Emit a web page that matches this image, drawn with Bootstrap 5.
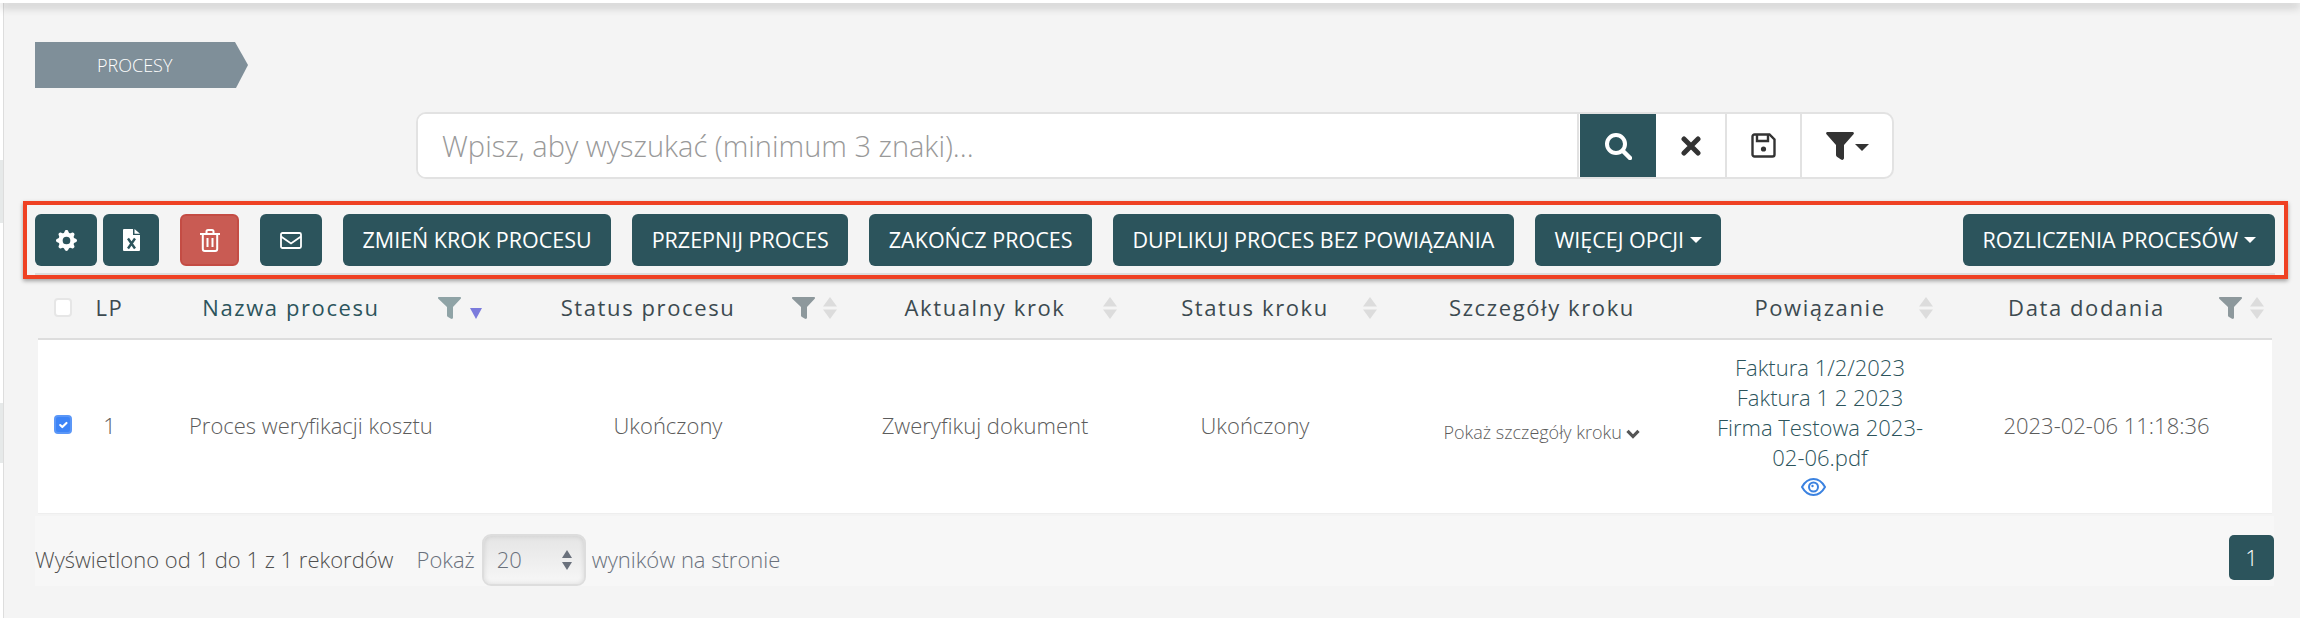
<!DOCTYPE html>
<html lang="pl">
<head>
    <meta charset="UTF-8">
    <title>Procesy</title>
    <link href="https://cdn.jsdelivr.net/npm/bootstrap@5.3.0/dist/css/bootstrap.min.css" rel="stylesheet">
    <style>
        body { background: #f4f4f4; font-family: "Open Sans", sans-serif; font-size: 22px; color: #5c5c5c; overflow: hidden; }
        .top-strip { height: 3px; background: #fff; box-shadow: 0 3px 10px rgba(0,0,0,.4); position: relative; }
        .side-strip { width: 4px; min-height: 615px; background: linear-gradient(#fff 157px, #e6e9e9 157px, #e6e9e9 220px, #fff 220px, #fff 400px, #e6e9e9 400px, #e6e9e9 460px, #fff 460px); border-right: 1px solid #ddd; }
        .page-main { width: 2296px; padding: 39px 12px 0 19px; }

        .crumb { width: 213px; height: 46px; margin-left: 12px; padding-left: 62px; background: #7f8f99; color: #fff; font-size: 18px; font-weight: 300; line-height: 46px; clip-path: polygon(0 0, 200px 0, 213px 50%, 201px 100%, 0 100%); }

        .search-box { width: 1478px; height: 67px; margin: 24px 0 22px 393px; background: #fff; border: 2px solid #e2e2e2; border-radius: 10px; overflow: hidden; }
        .search-box .form-control { border: 0; border-right: 2px solid #e2e2e2; border-radius: 0; height: 63px; padding-left: 24px; font-size: 29px; font-weight: 300; box-shadow: none; }
        .search-box .form-control::placeholder { color: #999; }
        .search-box .btn { border: 0; border-radius: 0; padding: 0; margin-left: 0 !important; display: flex; align-items: center; justify-content: center; height: 63px; }
        .search-box .btn-find { width: 76px; margin-left: 1px !important; background: #2c545c; }
        .btn-clear { width: 71px; border-right: 2px solid #e2e2e2 !important; }
        .btn-save { width: 75px; border-right: 2px solid #e2e2e2 !important; }
        .btn-funnel { width: 90px; }
        .caret-sm { width: 0; height: 0; border: 7px solid transparent; border-top-color: #333; border-bottom: 0; margin: 3px 0 0 1px; }

        .tool-frame { height: 78px; padding: 9px 9px 0 8px; border: 4px solid #ef4123; box-shadow: 0 2px 4px rgba(0,0,0,.35); }
        .tool-row { padding-bottom: 7px; border-bottom: 2px solid #ddd; box-sizing: content-box; height: 52px; gap: 21px; }
        .btn-dark-teal { background: #2c545c; border: 0; border-radius: 6px; color: #fff; font-size: 21.5px; font-weight: 400; padding: 0 19.5px; height: 52px; display: flex; align-items: center; white-space: nowrap; }
        .btn-dark-teal:hover { background: #2c545c; color: #fff; }
        .btn-ico { padding: 0; justify-content: center; }
        .btn-trash { width: 59px; background: #c95b53; border: 2px solid #c44c44; }
        .btn-trash:hover { background: #c95b53; }
        .w-gear, .w-mail { width: 62px; }
        .w-xls { width: 56px; }
        .pair { gap: 6px; }

        .proc-table { width: 2234px; margin: 1px 0 0 15px; table-layout: fixed; --bs-table-bg: transparent; --bs-table-color: #5c5c5c; }
        .proc-table > :not(caption) > * > * { padding: 0; border: 0; box-shadow: none; }
        .proc-table thead th { height: 59px; padding-bottom: 3px; border-bottom: 2px solid #ddd; font-weight: 400; color: #3c4a50; letter-spacing: 1.6px; vertical-align: middle; white-space: nowrap; }
        .proc-table tbody td { height: 174px; padding-bottom: 3px; background: #fff; font-weight: 300; line-height: 30px; text-align: center; vertical-align: middle; border-bottom: 1px solid #eee; }
        .th-in { display: flex; align-items: center; padding: 0 8px; }
        .th-in > span { flex-grow: 1; text-align: center; }
        .pad-f { padding-left: 13px; }
        .pad-s { padding-left: 30px; }
        .sort-ico { margin-left: 8px; flex-shrink: 0; }
        .active-col { color: #2c545c; }
        .proc-table .form-check-input { width: 18px; height: 19px; margin: 0; border: 2px solid #e6e6e6; border-radius: 4px; float: none; display: block; margin-left: 16px; }
        .proc-table .form-check-input:checked { background-color: #3d84f7; border-color: #5b97f7; }
        .name-cell { text-align: left !important; padding-left: 58px !important; }
        .step-link { font-size: 18px; color: #5c5c5c; position: relative; top: 6px; }
        .rel-link { color: #2c545c; padding: 0 12px 3px !important; }
        .rel-link a { color: inherit; text-decoration: none; display: block; }
        .eye-ico { margin: 5px auto 0; position: relative; left: -7px; }

        .foot-bar { width: 2239px; height: 70px; margin: 2px 0 0 12px; padding-top: 18px; background: #f7f7f7; }
        .foot-bar, .foot-bar label { font-weight: 300; color: #4f4f4f; }
        .foot-bar .muted-txt { color: #6a717c; }
        .foot-pokaz { margin-left: 23px; }
        .size-select { width: 104px; height: 52px; margin: 0 6px 0 7px; padding: 0 0 0 13px; font-size: 22px; font-weight: 300; color: #6a717c; border: 2px solid #ddd; border-radius: 9px; box-shadow: inset 0 0 5px rgba(0,0,0,.12); background: url("data:image/svg+xml,%3Csvg xmlns='http://www.w3.org/2000/svg' width='10' height='20'%3E%3Cpath d='M5 0l5 8H0zM5 20l5-8H0z' fill='%236a717c'/%3E%3C/svg%3E") no-repeat right 12px center, linear-gradient(#e5e5e5, #f7f7f7); }
        .page-one { width: 45px; height: 45px; margin-top: -4px; border-radius: 5px; background: #2c545c; color: #fff; font-weight: 300; }
    </style>
</head>
<body>
    <div class="top-strip"></div>
    <div class="d-flex">
        <div class="side-strip"></div>
        <div class="page-main">
            <div class="crumb">PROCESY</div>

            <div class="search-box input-group d-flex flex-nowrap">
                <input type="text" class="form-control" placeholder="Wpisz, aby wyszukać (minimum 3 znaki)...">
                <button class="btn btn-find" aria-label="Szukaj">
                    <svg width="28" height="28" viewBox="0 0 28 28" fill="none" stroke="#fff"><circle cx="12" cy="12" r="9" stroke-width="4"/><path d="M19 19l7 7" stroke-width="4.5" stroke-linecap="round"/></svg>
                </button>
                <button class="btn btn-clear" aria-label="Wyczyść">
                    <svg width="20" height="20" viewBox="0 0 20 20" stroke="#333" stroke-width="5" stroke-linecap="round"><path d="M3 3l14 14M17 3L3 17"/></svg>
                </button>
                <button class="btn btn-save" aria-label="Zapisz">
                    <svg width="25" height="25" viewBox="0 0 25 25" fill="none" stroke="#333" stroke-width="2.4"><path d="M3.5 1.5h15l5 5v15a2 2 0 0 1-2 2h-18a2 2 0 0 1-2-2v-18a2 2 0 0 1 2-2z"/><path d="M6 2v6h11V2"/><circle cx="12.5" cy="16" r="2.6" fill="#333" stroke="none"/></svg>
                </button>
                <button class="btn btn-funnel" aria-label="Filtry">
                    <svg width="28" height="28" viewBox="0 0 28 28" fill="#333"><path d="M1.5 0h25c1.300 0 1.800 1.300 1 2.300L18 13v13c0 1.500-1.500 2.500-3 1.500l-3-2c-1-.6-2-1.200-2-2.500V13L.5 2.300C-.3 1.300.2 0 1.500 0z"/></svg>
                    <span class="caret-sm"></span>
                </button>
            </div>

            <div class="tool-frame">
                <div class="tool-row d-flex">
                    <div class="d-flex pair">
                        <button class="btn btn-dark-teal btn-ico w-gear" aria-label="Ustawienia">
                            <svg width="21" height="21" viewBox="0 0 16 16" fill="#fff"><path d="M9.405 1.05c-.413-1.4-2.397-1.4-2.81 0l-.1.34a1.464 1.464 0 0 1-2.105.872l-.31-.17c-1.283-.698-2.686.705-1.987 1.987l.169.311c.446.82.023 1.841-.872 2.105l-.34.1c-1.4.413-1.4 2.397 0 2.81l.34.1a1.464 1.464 0 0 1 .872 2.105l-.17.31c-.698 1.283.705 2.686 1.987 1.987l.311-.169a1.464 1.464 0 0 1 2.105.872l.1.34c.413 1.4 2.397 1.4 2.81 0l.1-.34a1.464 1.464 0 0 1 2.105-.872l.31.17c1.283.698 2.686-.705 1.987-1.987l-.169-.311a1.464 1.464 0 0 1 .872-2.105l.34-.1c1.4-.413 1.4-2.397 0-2.81l-.34-.1a1.464 1.464 0 0 1-.872-2.105l.17-.31c.698-1.283-.705-2.686-1.987-1.987l-.311.169a1.464 1.464 0 0 1-2.105-.872l-.1-.34zM8 10.930a2.929 2.929 0 1 1 0-5.860 2.929 2.929 0 0 1 0 5.858z"/></svg>
                        </button>
                        <button class="btn btn-dark-teal btn-ico w-xls" aria-label="Eksport">
                            <svg width="17" height="22" viewBox="0 0 17 22"><path d="M0 1a1 1 0 0 1 1-1h9v6h7v15a1 1 0 0 1-1 1H1a1 1 0 0 1-1-1z" fill="#fff"/><path d="M11.500 0L17 4.700h-5.500z" fill="#fff"/><path d="M5 9.500l7 10M12 9.500l-7 10" stroke="#2c545c" stroke-width="2.400"/></svg>
                        </button>
                    </div>
                    <button class="btn btn-dark-teal btn-ico btn-trash" aria-label="Usuń">
                        <svg width="20" height="23" viewBox="0 0 20 23" fill="none" stroke="#fff" stroke-width="2"><path d="M0 5h20M6.500 5V2.500a1.500 1.500 0 0 1 1.500-1.500h4a1.500 1.500 0 0 1 1.500 1.500V5M2.800 5v15a2 2 0 0 0 2 2h10.400a2 2 0 0 0 2-2V5M7.500 9v9M12.500 9v9"/></svg>
                    </button>
                    <button class="btn btn-dark-teal btn-ico w-mail" aria-label="Wyślij">
                        <svg width="22" height="17" viewBox="0 0 22 17" fill="none" stroke="#fff" stroke-width="1.800"><rect x="1" y="1" width="20" height="15" rx="1.500"/><path d="M1 4.500l10 7 10-7"/></svg>
                    </button>
                    <button class="btn btn-dark-teal">ZMIEŃ KROK PROCESU</button>
                    <button class="btn btn-dark-teal">PRZEPNIJ PROCES</button>
                    <button class="btn btn-dark-teal">ZAKOŃCZ PROCES</button>
                    <button class="btn btn-dark-teal">DUPLIKUJ PROCES BEZ POWIĄZANIA</button>
                    <button class="btn btn-dark-teal dropdown-toggle">WIĘCEJ OPCJI</button>
                    <button class="btn btn-dark-teal dropdown-toggle ms-auto">ROZLICZENIA PROCESÓW</button>
                </div>
            </div>

            <table class="table proc-table mb-0">
                <colgroup id="cols"></colgroup>
                <thead>
                    <tr id="headRow"></tr>
                </thead>
                <tbody>
                    <tr>
                        <td><input class="form-check-input" type="checkbox" checked aria-label="Zaznacz"></td>
                        <td>1</td>
                        <td class="name-cell">Proces weryfikacji kosztu</td>
                        <td>Ukończony</td>
                        <td>Zweryfikuj dokument</td>
                        <td>Ukończony</td>
                        <td>
                            <span class="step-link">Pokaż szczegóły kroku
                                <svg width="14" height="10" viewBox="0 0 14 10" fill="none" stroke="#555" stroke-width="3.200"><path d="M1.500 1.800L7 7.500l5.500-5.700"/></svg>
                            </span>
                        </td>
                        <td class="rel-link">
                            <a href="#">Faktura 1/2/2023</a>
                            <a href="#">Faktura 1 2 2023</a>
                            <a href="#">Firma Testowa 2023-02-06.pdf</a>
                            <svg class="d-block eye-ico" width="25" height="20" viewBox="0 0 25 20" fill="none" stroke="#3b82e0" stroke-width="2"><path d="M1 10C4 4.500 8 2 12.500 2S21 4.500 24 10c-3 5.500-7 8-11.500 8S4 15.500 1 10z"/><circle cx="12.500" cy="10" r="4.500"/><circle cx="11.500" cy="9" r="1.200" fill="#3b82e0" stroke="none"/></svg>
                        </td>
                        <td>2023-02-06 11:18:36</td>
                    </tr>
                </tbody>
            </table>

            <div class="foot-bar d-flex align-items-center">
                <span>Wyświetlono od 1 do 1 z 1 rekordów</span>
                <label class="muted-txt foot-pokaz" for="pageSize">Pokaż</label>
                <select id="pageSize" class="form-select size-select">
                    <option>20</option>
                </select>
                <span class="muted-txt">wyników na stronie</span>
                <div class="page-one ms-auto d-flex align-items-center justify-content-center">1</div>
            </div>
        </div>
    </div>

    <script src="https://cdn.jsdelivr.net/npm/bootstrap@5.3.0/dist/js/bootstrap.bundle.min.js"></script>
    <script>
        const funnel = color => `<svg width="23" height="22" viewBox="0 0 23 22" fill="${color}" class="flex-shrink-0"><path d="M1 0h21c.9 0 1.300 1 .7 1.700L15 10v10.500c0 1.300-1 1.700-2 1.300l-2.500-1.500c-.7-.4-1.500-.8-1.500-1.800V10L.3 1.700C-.3 1 .1 0 1 0z"/></svg>`;
        const sortBoth = `<svg class="sort-ico" width="14" height="22" viewBox="0 0 14 22" fill="#dcdcdc"><path d="M7 0l7 9.500H0zM7 22l7-9.500H0z"/></svg>`;
        const sortDown = `<svg class="sort-ico" width="14" height="22" viewBox="0 0 14 22" fill="#7b7bdc"><path d="M1 11h12l-6 11z"/></svg>`;

        // szerokosci kolumn i naglowki
        const columns = [
            { w: 50 }, { w: 43, title: "LP" },
            { w: 360, title: "Nazwa procesu", filter: "#8fa3a6", sort: sortDown, active: true },
            { w: 354, title: "Status procesu", filter: "#8d989c", sort: sortBoth },
            { w: 280, title: "Aktualny krok", sort: sortBoth },
            { w: 260, title: "Status kroku", sort: sortBoth },
            { w: 314, title: "Szczegóły kroku" },
            { w: 242, title: "Powiązanie", sort: sortBoth },
            { w: 331, title: "Data dodania", filter: "#8d989c", sort: sortBoth }
        ];

        document.getElementById("cols").innerHTML = columns.map(c => `<col style="width:${c.w}px">`).join("");

        document.getElementById("headRow").innerHTML = columns.map((c, i) => {
            if (i === 0) return `<th><input class="form-check-input" type="checkbox" aria-label="Zaznacz wszystko"></th>`;
            if (i === 1) return `<th class="text-center">${c.title}</th>`;
            const pad = c.filter ? "pad-f" : (c.sort ? "pad-s" : "");
            const icons = (c.filter ? funnel(c.filter) : "") + (c.sort || "");
            return `<th><div class="th-in ${pad}"><span class="${c.active ? "active-col" : ""}">${c.title}</span>${icons}</div></th>`;
        }).join("");
    </script>
</body>
</html>
